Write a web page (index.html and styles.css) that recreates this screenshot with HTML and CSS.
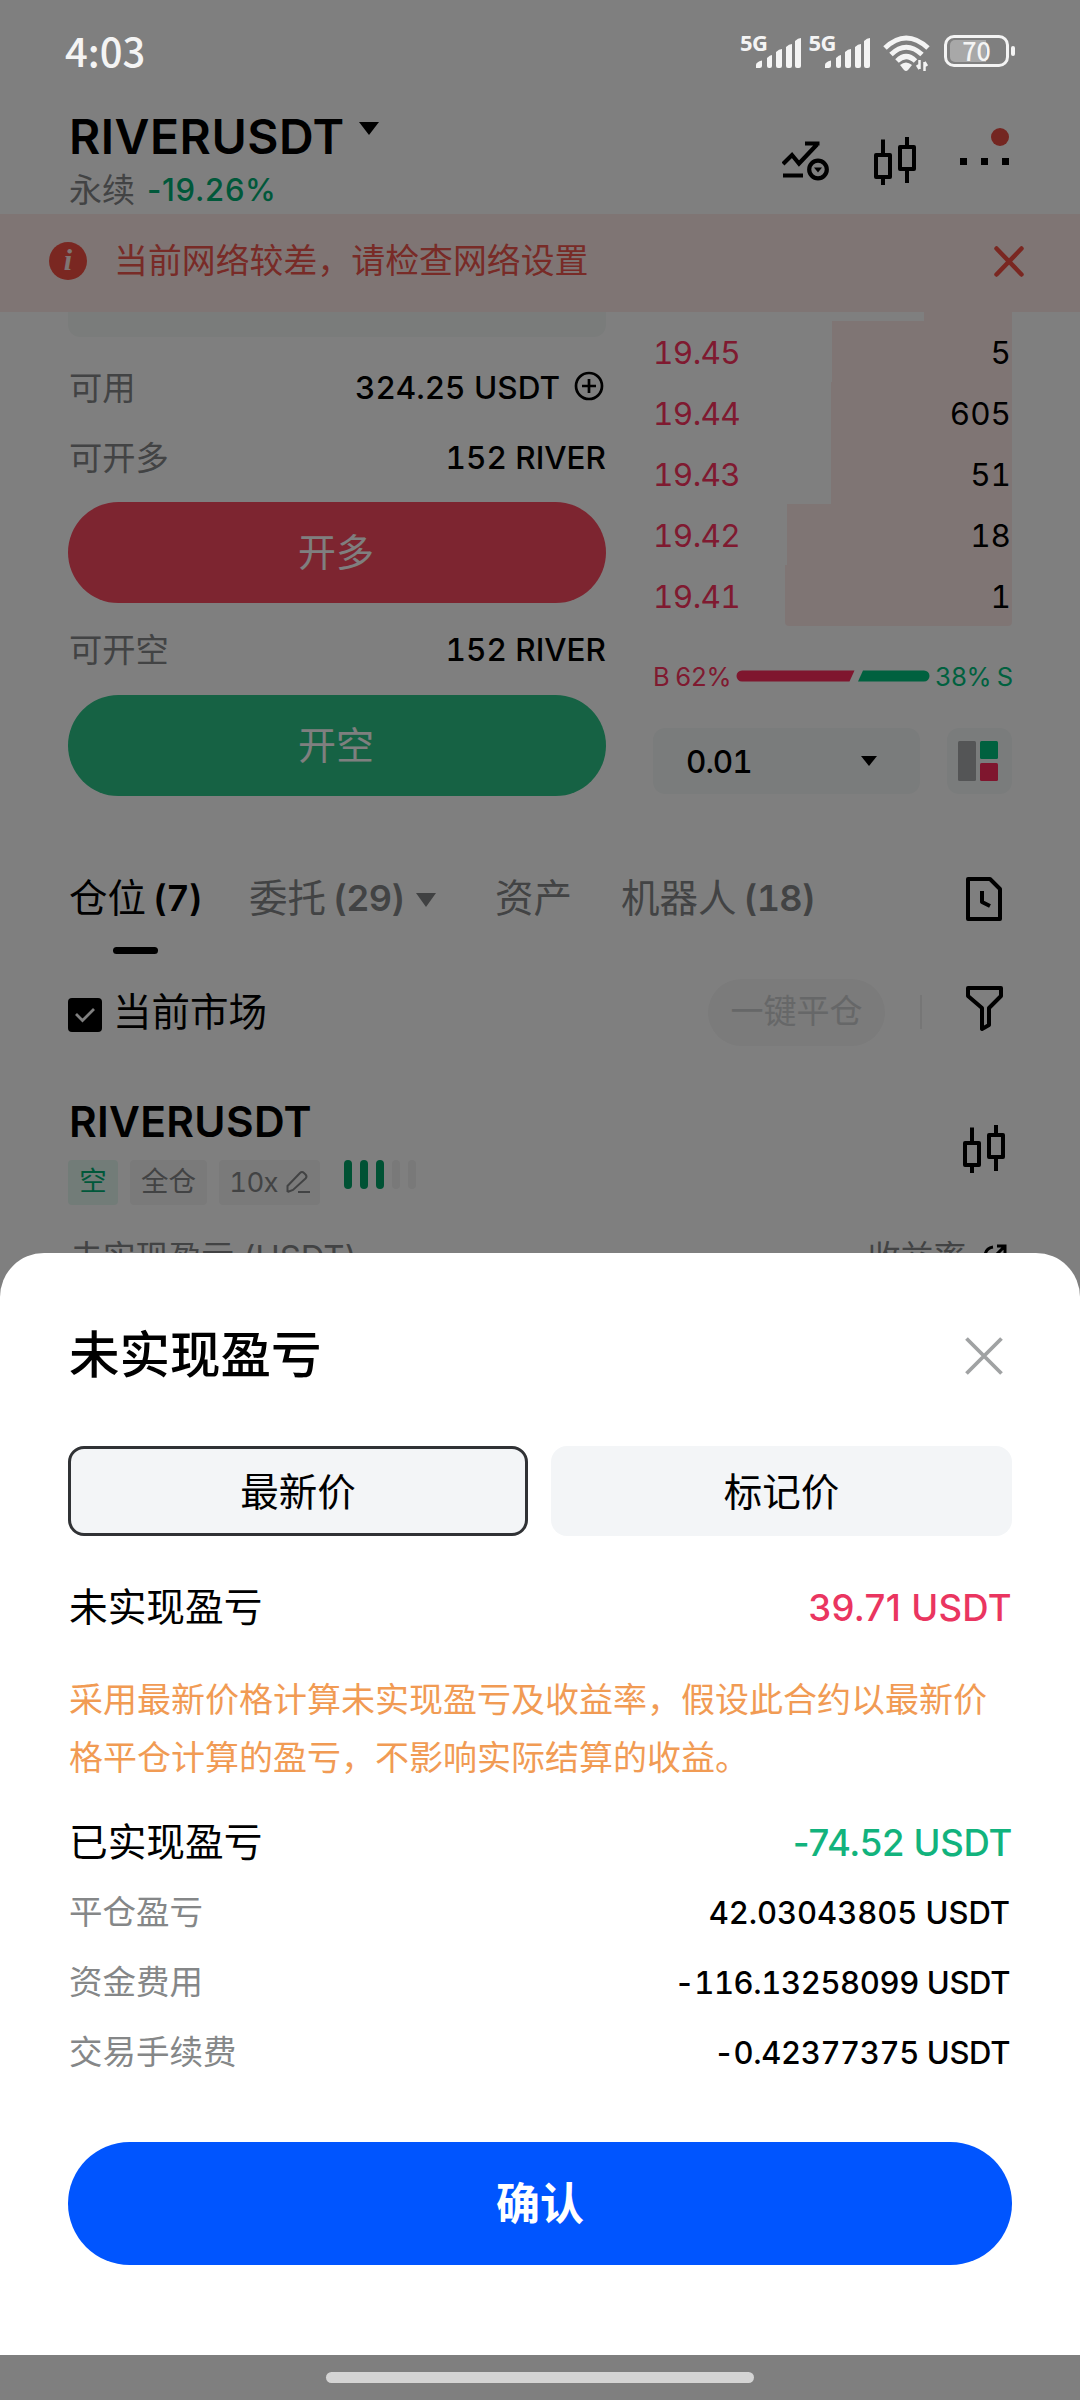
FILE: index.html
```html
<!DOCTYPE html>
<html lang="zh-CN">
<head>
<meta charset="utf-8">
<title>RIVERUSDT</title>
<link rel="stylesheet" href="styles.css">
</head>
<body>
<svg width="0" height="0" class="defs">
  <symbol id="candles" viewBox="0 0 42 48">
    <g fill="none" stroke="#000" stroke-width="4" stroke-linejoin="round">
      <rect x="2" y="18" width="14" height="22"/><path d="M9 2.500V18M9 40v8"/>
      <rect x="26" y="10" width="14" height="22"/><path d="M33 0v10M33 32v14"/>
    </g>
  </symbol>
  <symbol id="signal" viewBox="0 0 46 30">
    <g fill="#f4f4f4"><path d="M0 30v-3q0-3 6-4.500v5q0 2.500-2.500 2.500zM11 20q3-3 5-3v11q0 2-2 2h-1q-2 0-2-2zM20 14q3-3 6-3v17q0 2-2 2h-2q-2 0-2-2zM30 9q3-3 6-3v22q0 2-2 2h-2q-2 0-2-2zM39 3q3-3 6-3v28q0 2-2 2h-2q-2 0-2-2z"/></g>
  </symbol>
</svg>
<div class="screen">
  <div class="app">
    <header class="header">
      <div class="pair">
        <div class="pair-name"><span class="name">RIVERUSDT</span><svg class="caret" width="20" height="13"><path d="M0 0h20L10 13z"/></svg></div>
        <div class="pair-sub"><span class="muted">永续</span><span class="change">-19.26%</span></div>
      </div>
      <div class="header-icons">
        <svg width="48" height="40" viewBox="0 0 48 40" fill="none" stroke="#000" stroke-width="4.200"><path d="M1 23l9-9 7 8.500L35 3.500M23 2.500h14.500M1 34.500h20"/><circle cx="36" cy="28.500" r="8.800"/><path d="M32 26.500h8l-4 5z" fill="#000" stroke="none"/></svg>
        <svg width="42" height="48"><use href="#candles"/></svg>
        <div class="more"><i></i><i></i><i></i><b></b></div>
      </div>
    </header>
    <div class="alert">
      <span class="info">i</span>
      <span class="alert-text">当前网络较差，请检查网络设置</span>
      <svg width="30" height="31" viewBox="0 0 30 31" stroke="#f44f42" stroke-width="4.500" stroke-linecap="round"><path d="M2.500 2.500l25 26M27.500 2.500l-25 26"/></svg>
    </div>
    <div class="trade">
      <section class="order">
        <div class="field"></div>
        <div class="row r1"><span class="muted">可用</span><span class="amount wide">324.25 USDT</span><svg width="32" height="32" fill="none" stroke="#000" stroke-width="2.700"><circle cx="16" cy="16" r="13"/><path d="M9 16h14M16 9v14"/></svg></div>
        <div class="row r2"><span class="muted">可开多</span><span class="amount">152 RIVER</span></div>
        <button class="btn long">开多</button>
        <div class="row r3"><span class="muted">可开空</span><span class="amount">152 RIVER</span></div>
        <button class="btn short">开空</button>
      </section>
      <section class="book">
        <div class="sliver"></div>
        <div class="level"><span>19.45</span><span class="depth d1">5</span></div>
        <div class="level"><span>19.44</span><span class="depth d2">605</span></div>
        <div class="level"><span>19.43</span><span class="depth d2">51</span></div>
        <div class="level"><span>19.42</span><span class="depth d4">18</span></div>
        <div class="level"><span>19.41</span><span class="depth d5">1</span></div>
        <div class="ratio"><span class="buy">B 62%</span><svg width="194" height="12"><path d="M6 .5h112.500l-5 11H6a5.500 5.500 0 0 1 0-11z" fill="#ff2c5c"/><path d="M127 .5h61a5.500 5.500 0 0 1 0 11h-66z" fill="#00c27e"/></svg><span class="sell">38% S</span></div>
        <div class="book-tools">
          <div class="step"><span>0.01</span><svg width="16" height="10"><path d="M0 0h16L8 10z"/></svg></div>
          <div class="layout"><svg width="40" height="40"><rect width="18" height="40" rx="1.500" fill="#a9abac"/><rect x="22" width="18" height="18" rx="1.500" fill="#00c27e"/><rect x="22" y="22" width="18" height="18" rx="1.500" fill="#ff2c5c"/></svg></div>
        </div>
      </section>
    </div>
    <nav class="tabs">
      <div class="tab active">仓位<b>(7)</b></div>
      <div class="tab t2">委托<b>(29)</b><svg width="20" height="14"><path d="M0 0h20L10 14z" fill="#818384"/></svg></div>
      <div class="tab t3">资产</div>
      <div class="tab t4">机器人<b>(18)</b></div>
      <svg class="history" width="38" height="46" viewBox="0 0 38 46" fill="none" stroke="#000" stroke-width="4" stroke-linejoin="round"><path d="M3 3h22l10 10v30H3zM17 15v11l8 4"/></svg>
    </nav>
    <div class="filter">
      <span class="check"><svg width="20" height="16" fill="none" stroke="#fff" stroke-width="2.800"><path d="M1 7l6.500 6.500L19 2"/></svg></span>
      <span class="market">当前市场</span>
      <span class="close-all">一键平仓</span>
      <span class="divider"></span>
      <svg class="funnel" width="38" height="48" viewBox="0 0 38 48" fill="none" stroke="#000" stroke-width="4" stroke-linejoin="round"><path d="M3 4h33v8L24 24v17l-7 4V24L3 12z"/></svg>
    </div>
    <section class="position">
      <div>
        <div class="pos-name">RIVERUSDT</div>
        <div class="tags">
          <span class="tag side">空</span><span class="tag cross">全仓</span>
          <span class="tag lever">10x<svg width="24" height="24" viewBox="0 0 24 24" fill="none" stroke="#858788" stroke-width="2"><path d="M1.500 22v-6L14 3q2-2 4 0l1.500 1.500q2 2 0 4L7 20l-5.500 2M12 22h12"/></svg></span>
          <span class="risk"><i></i><i></i><i></i><i class="off"></i><i class="off"></i></span>
        </div>
      </div>
      <svg width="42" height="48"><use href="#candles"/></svg>
    </section>
    <div class="pnl-head"><span>未实现盈亏 (USDT)</span><span class="roi">收益率</span><svg width="24" height="24" fill="none" stroke="#000" stroke-width="3"><path d="M10 3C4 4 2 8 2 13v9h19v-8M13 11l9-9M14 2h8v8"/></svg></div>
  </div>

  <div class="overlay">
    <div class="status">
      <span class="time">4:03</span>
      <div class="net"><span>5G</span><svg width="46" height="30"><use href="#signal"/></svg></div>
      <div class="net second"><span>5G</span><svg width="46" height="30"><use href="#signal"/></svg></div>
      <svg class="wifi" width="48" height="38" viewBox="0 0 48 38" fill="none" stroke="#f4f4f4" stroke-width="5"><path d="M2 14Q23-6 45 14M8 20.500Q23 6 39 20.500M14 27Q23 18 32.500 27"/><path d="M17 31q6-5 12 0l-4 5q-2 2-4 0z" fill="#f4f4f4" stroke="none"/><path d="M36.500 26v9M34 31l2.500 4M41.500 37v-9M44 32l-2.500-4" stroke-width="2.500"/></svg>
      <div class="battery"><div class="cell"><div class="charge"></div><span>70</span></div><i></i></div>
    </div>
    <section class="sheet">
      <div class="sheet-head"><h1>未实现盈亏</h1><svg width="38" height="38" viewBox="0 0 38 38" stroke="#a0a2a3" stroke-width="3.800"><path d="M1.500 1.500l35 35M36.500 1.500l-35 35"/></svg></div>
      <div class="segments"><div class="segment selected">最新价</div><div class="segment">标记价</div></div>
      <div class="line main m1"><span>未实现盈亏</span><b class="up">39.71 USDT</b></div>
      <p class="notice">采用最新价格计算未实现盈亏及收益率，假设此合约以最新价格平仓计算的盈亏，不影响实际结算的收益。</p>
      <div class="line main m2"><span>已实现盈亏</span><b class="down">-74.52 USDT</b></div>
      <div class="line"><span>平仓盈亏</span><b>42.03043805 USDT</b></div>
      <div class="line cost"><span>资金费用</span><b>-116.13258099 USDT</b></div>
      <div class="line cost"><span>交易手续费</span><b>-0.42377375 USDT</b></div>
      <button class="confirm">确认</button>
    </section>
    <div class="home"><i></i></div>
  </div>
</div>
</body>
</html>
```
FILE: styles.css
```css
* { box-sizing: border-box; }
body { margin: 0; background: #fff; font-family: Inter, "Noto Sans CJK SC", sans-serif; color: #000; font-variant-numeric: tabular-nums; }
svg { display: block; flex: none; }
.defs { position: absolute; }
button { border: 0; font-family: inherit; padding: 0; color: #fff; }
.screen { position: relative; width: 1080px; height: 2400px; overflow: hidden; }
.app { height: 1253px; overflow: hidden; padding-top: 104px; }
.muted { color: #858788; }

.header { height: 110px; padding: 0 71px 0 69px; display: flex; justify-content: space-between; }
.pair-name { display: flex; height: 65px; align-items: center; gap: 14px; }
.name { font-size: 48px; font-weight: 600; letter-spacing: .5px; }
.pair-name .caret { margin-bottom: 17px; }
.pair-sub { display: flex; align-items: center; height: 34px; font-size: 33px; line-height: 34px; gap: 12px; margin-top: 4px; }
.change { color: #00b075; font-size: 31px; font-weight: 500; letter-spacing: .7px; font-variant-numeric: normal; }
.header-icons { display: flex; align-items: center; height: 112px; margin-top: 1px; }
.header-icons > svg:first-child { margin-right: 44px; }
.more { position: relative; display: flex; gap: 14px; margin-left: 44px; }
.more i { width: 7px; height: 7px; background: #000; }
.more b { position: absolute; right: 0; bottom: 19px; width: 18px; height: 18px; border-radius: 50%; background: #e94d43; }

.alert { height: 98px; background: #ffebe8; display: flex; align-items: center; padding: 0 56px 4px 49px; }
.info { width: 38px; height: 38px; border-radius: 50%; background: #f44f42; color: #ffebe8; font: italic bold 30px/36px "Liberation Serif", serif; text-align: center; }
.alert-text { margin: -1px auto 0 27px; font-size: 33.900px; line-height: 50px; color: #f0564f; }

.trade { display: flex; justify-content: space-between; padding: 0 68px; height: 544px; }
.order { width: 538px; }
.field { height: 25px; background: #f5f8f7; border-radius: 0 0 12px 12px; }
.row { display: flex; align-items: center; justify-content: space-between; height: 70px; font-size: 33.300px; padding-left: 1px; }
.row .muted { margin-top: -4px; }
.r1 { margin-top: 15px; }
.r1 .amount { margin-left: auto; margin-right: 13px; }
.r1 svg { margin: -2px 1px 0 0; }
.r3 { margin-top: 11px; }
.r3 + .btn { margin-top: 11px; }
.r2 + .btn { margin-top: 10px; }
.amount { font-size: 31.500px; font-weight: 500; letter-spacing: 0; }
.btn { display: block; width: 538px; height: 101px; border-radius: 51px; font-size: 38px; font-weight: 400; padding: 0 2px 6px 0; }
.long { background: #fa4a60; }
.short { background: #2cc488; }

.book { width: 359px; }
.sliver { margin-left: auto; width: 88px; height: 9px; background: #ffebe9; }
.level { display: flex; justify-content: space-between; height: 61px; line-height: 63px; font-size: 31.500px; letter-spacing: -.6px; padding-left: 0; color: #ff3460; }
.level .depth { color: #000; text-align: right; background: #ffebe9; height: 61px; padding-right: 1px; letter-spacing: 0; }
.d1 { width: 180px; } .d2 { width: 181px; } .d4 { width: 225px; } .d5 { width: 227px; border-radius: 0 0 4px 4px; }
.ratio { display: flex; align-items: center; justify-content: space-between; height: 34px; margin-top: 33px; font-size: 25.500px; letter-spacing: -.8px; white-space: nowrap; }
.buy { color: #ff3460; } .sell { color: #00c27e; }
.buy, .sell { width: 77px; }
.sell { text-align: right; }
.book-tools { display: flex; justify-content: space-between; margin-top: 35px; }
.step, .layout { height: 66px; border-radius: 12px; background: #f5f8f8; display: flex; align-items: center; }
.step { width: 267px; justify-content: space-between; padding: 0 43px 0 33px; font-size: 31.500px; font-weight: 500; letter-spacing: -1px; }
.layout { width: 65px; justify-content: center; padding-right: 3px; }

.tabs { display: flex; height: 110px; padding: 0 77px 0 69px; font-size: 38.500px; line-height: 84px; color: #858788; }
.tab b { font-size: 36px; font-weight: 600; letter-spacing: -.8px; margin-left: 7px; }
.tab { white-space: nowrap; display: flex; }
.tab svg { margin: 37px 0 0 0; }
.active { color: #000; position: relative; width: 132px; }
.active::after { content: ""; position: absolute; left: 44px; top: 91px; width: 45px; height: 7px; border-radius: 4px; background: #000; }
.t2 { margin-left: 48px; width: 187px; justify-content: flex-start; } .t3 { margin-left: 59px; width: 78px; } .t4 { margin-left: 48px; }
.t2 svg { margin-left: auto; }
.history { margin: 20px 0 0 auto; }

.filter { display: flex; align-items: center; height: 86px; padding: 0 77px 0 68px; margin-top: 3px; }
.check { width: 34px; height: 34px; background: #000; border-radius: 4px; display: grid; place-items: center; margin-top: 6px; }
.market { font-size: 38.500px; line-height: 60px; margin-left: 11px; }
.close-all { margin-left: auto; width: 177px; height: 67px; border-radius: 34px; background: #f6f6f6; color: #cdcfd0; font-size: 33px; line-height: 64px; text-align: center; }
.divider { width: 2px; height: 34px; background: #ececec; margin: 0 43px 0 35px; }
.funnel { margin-top: -9px; }

.position { display: flex; justify-content: space-between; align-items: center; height: 177px; padding: 9px 75px 0 68px; }
.position > svg { margin-top: 1px; }
.pos-name { font-size: 42.500px; font-weight: 600; line-height: 60px; padding-left: 1px; letter-spacing: .3px; }
.tags { display: flex; height: 45px; margin-top: 8px; }
.tag { height: 45px; line-height: 43px; border-radius: 4px; background: #f5f5f5; color: #858788; font-size: 27.500px; text-align: center; margin-right: 12px; }
.side { width: 50px; color: #00b075; background: #e5f8f1; }
.cross { width: 77px; }
.lever { width: 101px; display: flex; align-items: center; justify-content: center; gap: 8px; letter-spacing: -.8px; }
.risk { display: flex; gap: 8px; margin-left: 12px; }
.risk i { width: 8px; height: 29px; border-radius: 4px; background: #00a469; }
.risk .off { background: #f3f3f3; }
.pnl-head { display: flex; padding: 0 73px 0 70px; height: 50px; line-height: 50px; font-size: 33px; letter-spacing: -.2px; color: #858788; }
.roi { margin-left: auto; margin-right: 17px; }
.pnl-head svg { margin-top: 12px; }

.overlay { position: absolute; inset: 0; background: rgba(0,0,0,.5); display: flex; flex-direction: column; }
.status { display: flex; align-items: flex-start; height: 1253px; padding: 25px 65px 0 65px; color: #f4f4f4; }
.time { font-size: 40px; line-height: 50px; margin-right: auto; font-family: "Noto Sans CJK SC", sans-serif; font-weight: 500; }
.net { display: flex; margin-top: 8px; }
.net span { font: bold 22px/18px "Noto Sans", sans-serif; letter-spacing: -.5px; margin-right: -11px; }
.net svg { margin-top: 5px; }
.second { margin-left: 6px; }
.wifi { margin: 9px 13px 0 12px; }
.battery { display: flex; align-items: center; gap: 2px; margin-top: 10px; }
.battery > i { width: 4px; height: 10px; border-radius: 2px; background: #f4f4f4; }
.cell { position: relative; width: 65px; height: 32px; border: 3px solid #f4f4f4; border-radius: 10px; display: grid; place-items: center; }
.charge { position: absolute; left: 3px; top: 2px; width: 36px; height: 22px; border-radius: 5px 0 0 5px; background: #a8a8a8; }
.cell span { position: relative; font: 500 25px/24px "Noto Sans CJK SC", sans-serif; margin-top: -3px; }

.sheet { flex: none; height: 1102px; border-radius: 44px 44px 0 0; background: #fff; padding: 0 68px; }
.sheet-head { display: flex; align-items: center; justify-content: space-between; height: 193px; padding: 12px 9px 0 1px; }
h1 { margin: -1px 0 0; font-size: 50.500px; font-weight: 500; line-height: 70px; }
.segments { display: grid; grid-template-columns: 460px 461px; gap: 23px; }
.segment { height: 90px; background: #f3f5f7; border-radius: 16px; display: grid; place-items: center; font-size: 38.500px; padding-bottom: 5px; }
.selected { border: 3px solid #303235; }
.line { display: flex; justify-content: space-between; align-items: center; height: 70px; font-size: 33.500px; line-height: 60px; color: #858788; padding: 0 2px 0 1px; }
.line span { margin-top: -1px; }
.line b { color: #000; font-size: 31px; font-weight: 500; margin-top: 2px; letter-spacing: -.05px; }
.cost b { letter-spacing: -.38px; }
.main { font-size: 38.700px; color: #000; padding-right: 0; }
.main b { font-size: 36.500px; font-variant-numeric: normal; }
.m1 { margin-top: 36px; }
.main .up { color: #ea3560; letter-spacing: .3px; } .main .down { color: #12b37d; letter-spacing: -.3px; }
.notice { margin: 29px 0 20px 1px; width: 924px; font-size: 34px; line-height: 58px; color: #f19b54; }
.confirm { display: block; width: 944px; height: 123px; margin-top: 55px; border-radius: 62px; background: #0055ff; font-size: 44px; font-weight: 700; padding-bottom: 6px; }
.home { flex: 1; padding-top: 17px; }
.home i { display: block; width: 428px; height: 11px; border-radius: 6px; background: #d4d4d4; margin: 0 auto; }
```
